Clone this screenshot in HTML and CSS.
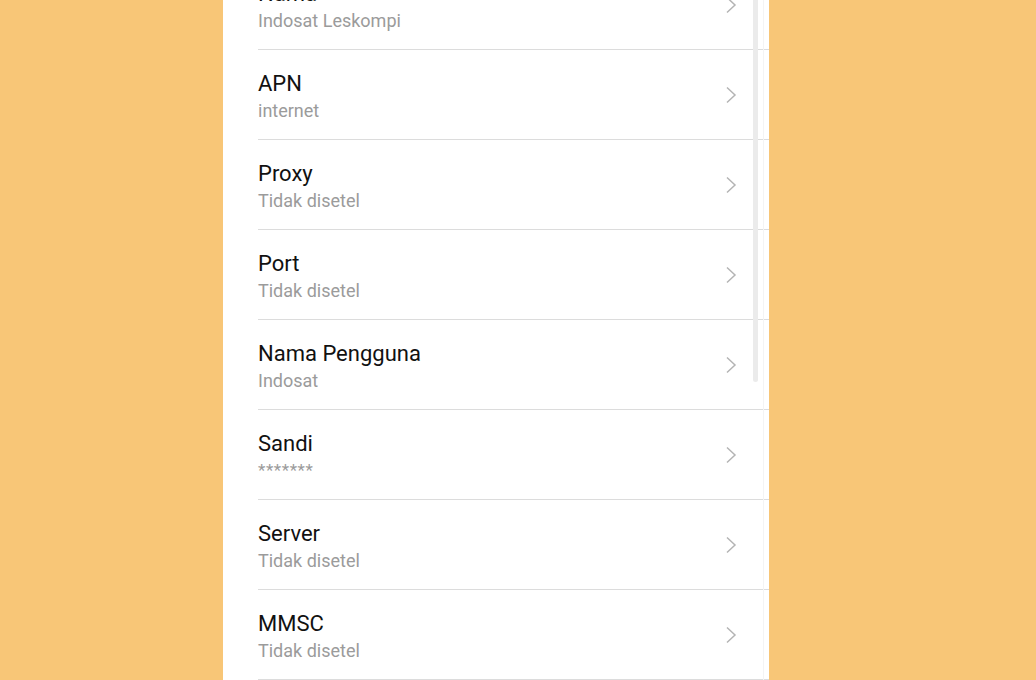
FILE: index.html
```html
<!DOCTYPE html>
<html lang="id">
<head>
<meta charset="utf-8">
<title>APN</title>
<link rel="stylesheet" href="styles.css">
</head>
<body>
<div class="page">
  <div class="panel">
    <ul class="list">
      <li class="item"><div class="text"><div class="title">Nama</div><div class="sub">Indosat Leskompi</div></div><svg class="chev" viewBox="0 0 12 18" width="12" height="18"><polyline points="2,1.5 10,9 2,16.5"/></svg></li>
      <li class="item"><div class="text"><div class="title">APN</div><div class="sub">internet</div></div><svg class="chev" viewBox="0 0 12 18" width="12" height="18"><polyline points="2,1.5 10,9 2,16.5"/></svg></li>
      <li class="item"><div class="text"><div class="title">Proxy</div><div class="sub">Tidak disetel</div></div><svg class="chev" viewBox="0 0 12 18" width="12" height="18"><polyline points="2,1.5 10,9 2,16.5"/></svg></li>
      <li class="item"><div class="text"><div class="title">Port</div><div class="sub">Tidak disetel</div></div><svg class="chev" viewBox="0 0 12 18" width="12" height="18"><polyline points="2,1.5 10,9 2,16.5"/></svg></li>
      <li class="item"><div class="text"><div class="title">Nama Pengguna</div><div class="sub">Indosat</div></div><svg class="chev" viewBox="0 0 12 18" width="12" height="18"><polyline points="2,1.5 10,9 2,16.5"/></svg></li>
      <li class="item"><div class="text"><div class="title">Sandi</div><div class="sub stars">*******</div></div><svg class="chev" viewBox="0 0 12 18" width="12" height="18"><polyline points="2,1.5 10,9 2,16.5"/></svg></li>
      <li class="item"><div class="text"><div class="title">Server</div><div class="sub">Tidak disetel</div></div><svg class="chev" viewBox="0 0 12 18" width="12" height="18"><polyline points="2,1.5 10,9 2,16.5"/></svg></li>
      <li class="item"><div class="text"><div class="title">MMSC</div><div class="sub">Tidak disetel</div></div><svg class="chev" viewBox="0 0 12 18" width="12" height="18"><polyline points="2,1.5 10,9 2,16.5"/></svg></li>
      <li class="item"><div class="text"><div class="title">Proxy MMS</div><div class="sub">Tidak disetel</div></div><svg class="chev" viewBox="0 0 12 18" width="12" height="18"><polyline points="2,1.5 10,9 2,16.5"/></svg></li>
    </ul>
    <div class="scrollbar"></div>
    <div class="edge"></div>
  </div>
</div>
</body>
</html>
```
FILE: styles.css
```css
html, body {
  margin: 0;
  padding: 0;
}
body {
  background: #f8c677;
  font-family: Roboto, "Noto Sans", sans-serif;
  overflow: hidden;
}
.page {
  height: 680px;
  padding-left: 223px;
  display: flex;
}
.panel {
  position: relative;
  width: 546px;
  height: 680px;
  background: #ffffff;
  overflow: hidden;
}
.list {
  list-style: none;
  margin: -40px 0 0 0;
  padding: 0;
}
.item {
  margin-left: 35px;
  height: 89px;
  border-bottom: 1px solid #dcdcdc;
  display: flex;
  align-items: center;
  padding-right: 32px;
}
.text {
  flex: 1;
  align-self: flex-start;
  padding-top: 19px;
}
.title {
  font-size: 22px;
  line-height: 29px;
  color: #111111;
}
.sub {
  font-size: 18px;
  line-height: 25px;
  color: #9b9b9b;
}
.sub.stars {
  font-size: 17px;
  letter-spacing: 0.6px;
}
.chev {
  display: block;
  fill: none;
  stroke: #b4b4b4;
  stroke-width: 1.5;
}
.scrollbar {
  position: absolute;
  left: 530px;
  top: 0;
  width: 5px;
  height: 382px;
  background: #ebebeb;
  border-radius: 0 0 3px 3px;
}
.edge {
  position: absolute;
  left: 540px;
  top: 0;
  width: 1px;
  height: 680px;
  background: #f4f4f4;
}
```
